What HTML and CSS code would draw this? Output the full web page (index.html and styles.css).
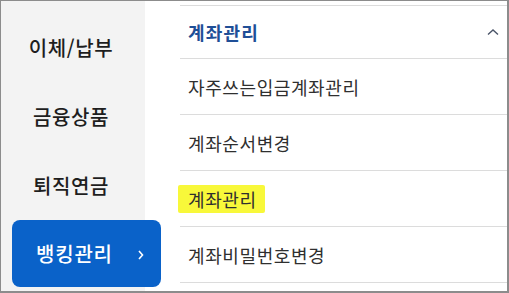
FILE: index.html
```html
<!DOCTYPE html>
<html lang="ko">
<head>
<meta charset="utf-8">
<link rel="stylesheet" href="styles.css">
</head>
<body>
<div class="frame">
  <nav class="side">
    <div class="side-item">이체/납부</div>
    <div class="side-item">금융상품</div>
    <div class="side-item">퇴직연금</div>
    <div class="side-active">
      <span class="side-active-label">뱅킹관리</span>
      <svg class="side-chev" width="8" height="12" viewBox="0 0 8 12"><polyline points="2,2 5.5,6 2,10" fill="none" stroke="#fff" stroke-width="1.6"/></svg>
    </div>
  </nav>
  <section class="panel">
    <div class="row row-head">
      <span class="head-title">계좌관리</span>
      <svg class="head-chev" width="12" height="8" viewBox="0 0 12 8"><polyline points="1,6.5 6,2 11,6.5" fill="none" stroke="#4a5468" stroke-width="1.4"/></svg>
    </div>
    <div class="row"><span class="row-text">자주쓰는입금계좌관리</span></div>
    <div class="row"><span class="row-text">계좌순서변경</span></div>
    <div class="row"><span class="row-text mark">계좌관리</span></div>
    <div class="row"><span class="row-text">계좌비밀번호변경</span></div>
    <div class="row row-last"></div>
  </section>
</div>
</body>
</html>
```
FILE: styles.css
```css
* { box-sizing: border-box; }
html, body { margin: 0; padding: 0; background: #fff; }
body { font-family: "Noto Sans CJK KR", "Noto Sans", sans-serif; }

.frame {
  width: 509px;
  height: 293px;
  border-top: 1px solid #8c8c8c;
  border-left: 1px solid #8c8c8c;
  border-right: 2px solid #8c8c8c;
  border-bottom: 2px solid #8c8c8c;
  display: flex;
  overflow: hidden;
}

.side {
  width: 144px;
  flex: none;
  background: #f3f3f3;
  padding-top: 12px;
  display: flex;
  flex-direction: column;
  position: relative;
  z-index: 1;
}

.side-item {
  height: 69px;
  display: flex;
  align-items: center;
  justify-content: center;
  padding-right: 4px;
  font-size: 20px;
  font-weight: 500;
  letter-spacing: 0.6px;
  color: #1e1e1e;
}

.side-active {
  margin-left: 11px;
  margin-right: -16px;
  height: 67px;
  background: #0a62c9;
  border-radius: 8px;
  display: flex;
  align-items: center;
  padding-left: 24px;
  color: #fff;
}

.side-active-label {
  font-size: 20px;
  font-weight: 500;
  letter-spacing: 0.8px;
}

.side-chev { margin-left: 24px; margin-top: 2px; }

.panel {
  flex: 1;
  padding-top: 4px;
  padding-left: 35px;
  display: flex;
  flex-direction: column;
}

.row {
  height: 56px;
  border-top: 1px solid #dcdcdc;
  display: flex;
  align-items: center;
  padding-left: 8px;
  flex: none;
}

.row-head {
  height: 53px;
  justify-content: space-between;
  padding-right: 8px;
}

.row-last { height: 10px; }

.head-title {
  font-size: 18px;
  font-weight: 700;
  letter-spacing: 1.2px;
  color: #1f4f97;
}

.row-text {
  font-size: 18px;
  letter-spacing: 0.6px;
  color: #2f2f2f;
}

.mark {
  background: #f8f83a;
  margin-left: -10px;
  padding: 1px 8px 1px 10px;
  border-radius: 2px;
}
```
